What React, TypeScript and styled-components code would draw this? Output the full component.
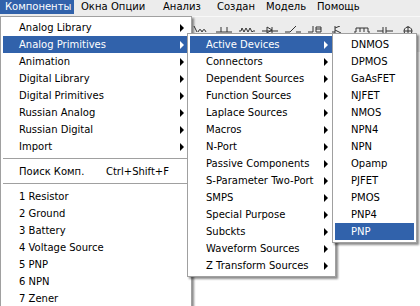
import styled, { createGlobalStyle } from "styled-components";

const GlobalStyle = createGlobalStyle`
  html, body {
    margin: 0;
    padding: 0;
    background: #ffffff;
    overflow: hidden;
  }
  body {
    font-family: "DejaVu Sans", Verdana, sans-serif;
    font-size: 10px;
    color: #000;
  }
`;

const Screen = styled.div`
  position: relative;
  width: 420px;
  height: 306px;
  overflow: hidden;
  display: flex;
  flex-direction: column;
  background: #ffffff;
`;

const MenuBar = styled.div`
  height: 16px;
  display: flex;
  align-items: flex-start;
  background: #ececec;
`;

const BarItem = styled.div<{ $active?: boolean; $width?: number }>`
  box-sizing: border-box;
  height: 14px;
  line-height: 13px;
  padding: 0 5px;
  width: ${(p) => (p.$width ? `${p.$width}px` : "auto")};
  margin-right: ${(p) => (p.$active ? "2px" : "0")};
  white-space: nowrap;
  background: ${(p) => (p.$active ? "#3162ab" : "transparent")};
  color: ${(p) => (p.$active ? "#ffffff" : "#000000")};
`;

const Toolbar = styled.div`
  height: 26px;
  display: flex;
  align-items: flex-start;
  gap: 7px;
  padding: 9px 0 0 193px;
  background: #ececec;
  border-top: 1px solid #f8f8f8;
`;

const ToolIcon = styled.svg`
  width: 16px;
  height: 16px;
  flex: none;
`;

const Workspace = styled.div`
  flex: 1;
  background: #ffffff;
`;

const Menu = styled.div<{ $left: number; $top: number; $width: number }>`
  position: absolute;
  left: ${(p) => p.$left}px;
  top: ${(p) => p.$top}px;
  width: ${(p) => p.$width}px;
  box-sizing: border-box;
  padding: 2px;
  background: #ffffff;
  border: 1px solid #a0a0a0;
  box-shadow: 2px 2px 2px rgba(0, 0, 0, 0.45);
`;

const Item = styled.div<{ $hl?: boolean }>`
  height: 17px;
  display: flex;
  align-items: center;
  padding: 0 5px 0 16px;
  white-space: nowrap;
  background: ${(p) => (p.$hl ? "#3162ab" : "transparent")};
  color: ${(p) => (p.$hl ? "#ffffff" : "#000000")};
`;

const Arrow = styled.span`
  margin-left: auto;
  width: 0;
  height: 0;
  border-left: 4px solid currentColor;
  border-top: 4px solid transparent;
  border-bottom: 4px solid transparent;
`;

const Shortcut = styled.span`
  margin-left: auto;
  margin-right: 15px;
`;

const Separator = styled.div`
  margin: 3px 0 4px;
  border-top: 1px solid #a0a0a0;
`;

const barItems: [string, number?][] = [
  ["Компоненты", 74],
  ["Окна", 30],
  ["Опции", 52],
  ["Анализ", 54],
  ["Создан", 49],
  ["Модель", 51],
  ["Помощь"],
];

const toolIcons = [
  "M1 0 L4 6 M5 6 Q7 1 9 6 Q11 1 13 6",
  "M0 6 H16 M5 1 V6 M11 1 V6",
  "M0 5 H2 L3 2 L5 6 L7 2 L9 6 L11 2 L13 6 L14 5 H16",
  "M0 5 H16 M5 1 L10 4 L5 7 Z M10 1 V7",
  "M0 6 H5 L11 0 M11 6 H16",
  "M0 6 H5 M5 0 V6 M8 1 H13 V6 H8 Z M8 3 H13",
  "M1 6 H4 M4 0 V7 M4 2 L9 0 M4 4 L10 7",
  "M0 6 H2 V2 H14 V6 H16 M6 2 V6 M10 2 V6",
  "M0 5 H6 M6 1 V8 M9 1 V8 M9 5 H16",
  "M8 0 V10 M4 5 H12 M8 1 A4 4 0 1 0 8.01 1",
];

const library = [
  "Analog Library",
  "Analog Primitives",
  "Animation",
  "Digital Library",
  "Digital Primitives",
  "Russian Analog",
  "Russian Digital",
  "Import",
];

const recent = ["1 Resistor", "2 Ground", "3 Battery", "4 Voltage Source", "5 PNP", "6 NPN", "7 Zener"];

const primitives = [
  "Active Devices",
  "Connectors",
  "Dependent Sources",
  "Function Sources",
  "Laplace Sources",
  "Macros",
  "N-Port",
  "Passive Components",
  "S-Parameter Two-Port",
  "SMPS",
  "Special Purpose",
  "Subckts",
  "Waveform Sources",
  "Z Transform Sources",
];

const devices = ["DNMOS", "DPMOS", "GaAsFET", "NJFET", "NMOS", "NPN4", "NPN", "Opamp", "PJFET", "PMOS", "PNP4", "PNP"];

export default function App() {
  return (
    <Screen>
      <GlobalStyle />
      <MenuBar>
        {barItems.map(([name, width], i) => (
          <BarItem key={name} $active={i === 0} $width={width}>
            {name}
          </BarItem>
        ))}
      </MenuBar>
      <Toolbar>
        {toolIcons.map((d, i) => (
          <ToolIcon key={i} viewBox="0 0 16 16">
            <path d={d} fill="none" stroke="#333" strokeWidth="1" />
          </ToolIcon>
        ))}
      </Toolbar>
      <Workspace />

      <Menu $left={0} $top={16} $width={192}>
        {library.map((name) => (
          <Item key={name} $hl={name === "Analog Primitives"}>
            {name}
            <Arrow />
          </Item>
        ))}
        <Separator />
        <Item>
          Поиск Комп.
          <Shortcut>Ctrl+Shift+F</Shortcut>
        </Item>
        <Separator />
        {recent.map((name) => (
          <Item key={name}>{name}</Item>
        ))}
      </Menu>

      <Menu $left={187} $top={33} $width={149}>
        {primitives.map((name) => (
          <Item key={name} $hl={name === "Active Devices"}>
            {name}
            <Arrow />
          </Item>
        ))}
      </Menu>

      <Menu $left={332} $top={33} $width={85}>
        {devices.map((name, i) => (
          <Item key={name} $hl={i === devices.length - 1}>
            {name}
          </Item>
        ))}
      </Menu>
    </Screen>
  );
}
